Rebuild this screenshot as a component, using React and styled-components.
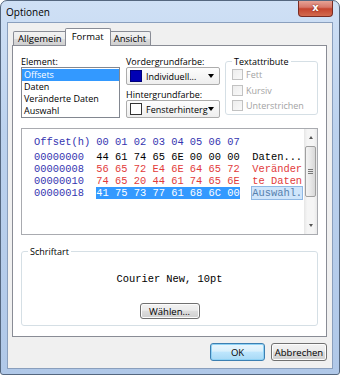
import styled, { createGlobalStyle } from "styled-components";

const GlobalStyle = createGlobalStyle`
  html, body {
    margin: 0;
    padding: 0;
    background: #fff;
  }
  body {
    font-family: "Open Sans", "Noto Sans", sans-serif;
    font-size: 9px;
    color: #000;
  }
`;

const Window = styled.div`
  width: 340px;
  height: 375px;
  box-sizing: border-box;
  border: 1px solid #55677f;
  border-radius: 7px 7px 3px 3px;
  background: linear-gradient(to bottom, #cfe0f5 0%, #bcd2ee 35%, #b0c8e8 100%);
  display: flex;
  flex-direction: column;
  overflow: hidden;
`;

const TitleBar = styled.div`
  height: 21px;
  display: flex;
  justify-content: space-between;
  align-items: flex-start;
  padding-left: 5px;
`;

const Title = styled.span`
  font-size: 10px;
  line-height: 22px;
`;

const CloseButton = styled.div`
  width: 35px;
  height: 17px;
  margin: -1px 6px 0 0;
  box-sizing: border-box;
  border: 1px solid #7a2c23;
  border-top: none;
  border-radius: 0 0 4px 4px;
  background: linear-gradient(to bottom, #e9a99c 0%, #d7786a 45%, #c5452f 55%, #d26b4f 100%);
  color: #fff;
  font-family: "DejaVu Sans", sans-serif;
  font-weight: bold;
  font-size: 10px;
  line-height: 15px;
  text-align: center;
  text-shadow: 0 0 2px #6b1b10;
`;

const Client = styled.div`
  flex: 1;
  margin: 0 6px 5px 6px;
  border: 1px solid #8a9fbd;
  background: #f0f0f0;
  padding: 5px 5px 7px 4px;
  display: flex;
  flex-direction: column;
`;

const TabStrip = styled.div`
  display: flex;
  align-items: flex-end;
  padding-left: 1px;
  height: 17px;
`;

const Tab = styled.div`
  position: relative;
  box-sizing: border-box;
  height: ${(p) => (p.$active ? "18px" : "14px")};
  margin: ${(p) => (p.$active ? "0 -2px -1px -2px" : "0")};
  padding: 0 ${(p) => (p.$active ? "6px" : "4px")};
  border: 1px solid #898c95;
  border-bottom: none;
  border-radius: 2px 2px 0 0;
  background: ${(p) =>
    p.$active
      ? "#fff"
      : "linear-gradient(to bottom, #f2f2f2 0%, #ebebeb 50%, #dddddd 51%, #cfcfcf 100%)"};
  z-index: ${(p) => (p.$active ? 1 : 0)};
  line-height: ${(p) => (p.$active ? "15px" : "13px")};
  font-size: 9.5px;
  white-space: nowrap;
`;

const Panel = styled.div`
  flex: 1;
  border: 1px solid #898c95;
  background: #fff;
  padding: 10px 8px 10px 8px;
  display: flex;
  flex-direction: column;
`;

const TopRow = styled.div`
  display: flex;
  align-items: flex-start;
`;

const Column = styled.div`
  width: ${(p) => p.$width}px;
  margin-left: ${(p) => p.$gap || 0}px;
  display: flex;
  flex-direction: column;
`;

const Label = styled.div`
  height: 11px;
  line-height: 11px;
  margin-top: ${(p) => p.$top || 0}px;
  white-space: nowrap;
`;

const ListBox = styled.div`
  height: 51px;
  box-sizing: border-box;
  border: 1px solid #828790;
  background: #fff;
  padding: 1px 0;
`;

const ListItem = styled.div`
  height: 12px;
  line-height: 12px;
  padding-left: 2px;
  background: ${(p) => (p.$selected ? "#3399ff" : "transparent")};
  color: ${(p) => (p.$selected ? "#fff" : "#000")};
  white-space: nowrap;
`;

const Combo = styled.div`
  height: 18px;
  box-sizing: border-box;
  border: 1px solid #acacac;
  border-radius: 2px;
  background: linear-gradient(to bottom, #fdfdfd, #eeeeee);
  display: flex;
  align-items: center;
  padding: 0 5px 0 3px;
`;

const Swatch = styled.span`
  width: 12px;
  height: 12px;
  box-sizing: border-box;
  border: 1px solid ${(p) => p.$border};
  background: ${(p) => p.$color};
  margin-right: 4px;
  flex-shrink: 0;
`;

const ComboText = styled.span`
  flex: 1;
  white-space: nowrap;
`;

const DropArrow = styled.span`
  width: 0;
  height: 0;
  border-left: 3px solid transparent;
  border-right: 3px solid transparent;
  border-top: 4px solid #000;
`;

const Group = styled.fieldset`
  box-sizing: border-box;
  width: ${(p) => p.$width}px;
  height: ${(p) => p.$height}px;
  margin: ${(p) => p.$margin};
  padding: 0 0 0 6px;
  border: 1px solid #d5dfe5;
  border-radius: 3px;
`;

const Legend = styled.legend`
  padding: 0 2px;
  margin-left: 0;
  line-height: 11px;
`;

const CheckRow = styled.label`
  display: flex;
  align-items: center;
  height: 15.5px;
  color: #a3a3a3;
  white-space: nowrap;
`;

const CheckBox = styled.span`
  width: 11px;
  height: 11px;
  box-sizing: border-box;
  border: 1px solid #c2c2c2;
  background: linear-gradient(135deg, #ededed, #f9f9f9);
  margin-right: 3px;
`;

const HexBox = styled.div`
  margin-top: 10px;
  height: 107px;
  box-sizing: border-box;
  border: 1px solid #a9abb0;
  background: #fff;
  display: flex;
`;

const HexContent = styled.div`
  flex: 1;
  padding: 7px 0 0 12px;
  font-family: "Liberation Mono", "Courier New", monospace;
  font-size: 10.4px;
`;

const HexRow = styled.div`
  display: flex;
  height: 12px;
  line-height: 12px;
  white-space: pre;
  color: ${(p) => p.$color};
  margin-bottom: ${(p) => (p.$header ? "3px" : "0")};
`;

const OffsetCell = styled.span`
  width: 10ch;
  color: #3434b0;
`;

const HexCell = styled.span`
  width: 25ch;
`;

const Selected = styled.span`
  background: #3399ff;
  color: #fff;
`;

const AsciiCell = styled.span`
  box-sizing: border-box;
  ${(p) =>
    p.$selected &&
    `
    background: #cfe5fb;
    outline: 1px solid #8fb8e4;
    color: #5680ad;
  `}
`;

const ScrollBar = styled.div`
  width: 13px;
  display: flex;
  flex-direction: column;
  background: linear-gradient(to right, #e6e6e6, #f5f5f5 25%, #f5f5f5 75%, #e9e9e9);
`;

const ScrollArrow = styled.div`
  height: 17px;
  display: flex;
  align-items: center;
  justify-content: center;
`;

const ArrowGlyph = styled.span`
  width: 0;
  height: 0;
  border-left: 2.5px solid transparent;
  border-right: 2.5px solid transparent;
  ${(p) => (p.$up ? "border-bottom" : "border-top")}: 3px solid #555;
`;

const Track = styled.div`
  flex: 1;
`;

const Thumb = styled.div`
  height: 51px;
  margin: 0 1px;
  box-sizing: border-box;
  border: 1px solid #a0a0a0;
  border-radius: 2px;
  background: linear-gradient(to right, #f4f4f4, #e8e8e8 50%, #d8d8d8);
  display: flex;
  align-items: center;
  justify-content: center;
`;

const Grip = styled.span`
  width: 5px;
  height: 5px;
  background: repeating-linear-gradient(to bottom, #777 0 1px, transparent 1px 2px);
`;

const FontBody = styled.div`
  display: flex;
  flex-direction: column;
  align-items: center;
  margin-left: -6px;
`;

const FontName = styled.div`
  margin-top: 16px;
  font-family: "Liberation Mono", "Courier New", monospace;
  font-size: 10.4px;
  line-height: 12px;
`;

const Button = styled.button`
  width: ${(p) => p.$width}px;
  height: ${(p) => p.$height || 18}px;
  margin-top: ${(p) => p.$top || 0}px;
  padding: 0;
  box-sizing: border-box;
  font-family: inherit;
  font-size: 9.5px;
  color: #000;
  border-radius: 3px;
  border: 1px solid ${(p) => (p.$default ? "#3c7fb1" : "#707070")};
  background: ${(p) =>
    p.$default
      ? "linear-gradient(to bottom, #eaf6fd 0%, #d9f0fc 45%, #bee6fd 50%, #a7d9f5 100%)"
      : "linear-gradient(to bottom, #f2f2f2 0%, #ebebeb 45%, #dddddd 50%, #cfcfcf 100%)"};
  box-shadow: inset 0 0 0 1px ${(p) => (p.$default ? "#8fd2f5" : "#fcfcfc")};
`;

const ButtonRow = styled.div`
  display: flex;
  justify-content: flex-end;
  gap: 6px;
  margin-top: 6px;
`;

const rows = [
  { off: "00000000", hex: "44 61 74 65 6E 00 00 00", ascii: "Daten...", color: "#000" },
  { off: "00000008", hex: "56 65 72 E4 6E 64 65 72", ascii: "Veränder", color: "#e23b3b" },
  { off: "00000010", hex: "74 65 20 44 61 74 65 6E", ascii: "te Daten", color: "#e23b3b" },
  { off: "00000018", hex: "41 75 73 77 61 68 6C 00", ascii: "Auswahl.", color: "#000", selected: true },
];

const elements = ["Offsets", "Daten", "Veränderte Daten", "Auswahl"];

export default function App() {
  return (
    <>
      <GlobalStyle />
      <Window>
        <TitleBar>
          <Title>Optionen</Title>
          <CloseButton>x</CloseButton>
        </TitleBar>
        <Client>
          <TabStrip>
            <Tab>Allgemein</Tab>
            <Tab $active>Format</Tab>
            <Tab>Ansicht</Tab>
          </TabStrip>
          <Panel>
            <TopRow>
              <Column $width={99}>
                <Label>Element:</Label>
                <ListBox>
                  {elements.map((e, i) => (
                    <ListItem key={e} $selected={i === 0}>
                      {e}
                    </ListItem>
                  ))}
                </ListBox>
              </Column>
              <Column $width={94} $gap={6}>
                <Label>Vordergrundfarbe:</Label>
                <Combo>
                  <Swatch $color="#0000b4" $border="#00007a" />
                  <ComboText>Individuell...</ComboText>
                  <DropArrow />
                </Combo>
                <Label $top={4}>Hintergrundfarbe:</Label>
                <Combo>
                  <Swatch $color="#fff" $border="#333" />
                  <ComboText>Fensterhinterg</ComboText>
                  <DropArrow />
                </Combo>
              </Column>
              <Group $width={93} $height={59} $margin="0 0 0 5px">
                <Legend>Textattribute</Legend>
                <CheckRow>
                  <CheckBox />
                  Fett
                </CheckRow>
                <CheckRow>
                  <CheckBox />
                  Kursiv
                </CheckRow>
                <CheckRow>
                  <CheckBox />
                  Unterstrichen
                </CheckRow>
              </Group>
            </TopRow>

            <HexBox>
              <HexContent>
                <HexRow $header $color="#3434b0">
                  <OffsetCell>Offset(h)</OffsetCell>
                  <HexCell>00 01 02 03 04 05 06 07</HexCell>
                </HexRow>
                {rows.map((r) => (
                  <HexRow key={r.off} $color={r.color}>
                    <OffsetCell>{r.off}</OffsetCell>
                    <HexCell>{r.selected ? <Selected>{r.hex}</Selected> : r.hex}</HexCell>
                    <AsciiCell $selected={r.selected}>{r.ascii}</AsciiCell>
                  </HexRow>
                ))}
              </HexContent>
              <ScrollBar>
                <ScrollArrow>
                  <ArrowGlyph $up />
                </ScrollArrow>
                <Track>
                  <Thumb>
                    <Grip />
                  </Thumb>
                </Track>
                <ScrollArrow>
                  <ArrowGlyph />
                </ScrollArrow>
              </ScrollBar>
            </HexBox>

            <Group $height={80} $margin="11px 0 0 0">
              <Legend>Schriftart</Legend>
              <FontBody>
                <FontName>Courier New, 10pt</FontName>
                <Button $width={60} $height={16} $top={18}>
                  Wählen...
                </Button>
              </FontBody>
            </Group>
          </Panel>
          <ButtonRow>
            <Button $width={55} $default>
              OK
            </Button>
            <Button $width={56}>Abbrechen</Button>
          </ButtonRow>
        </Client>
      </Window>
    </>
  );
}
